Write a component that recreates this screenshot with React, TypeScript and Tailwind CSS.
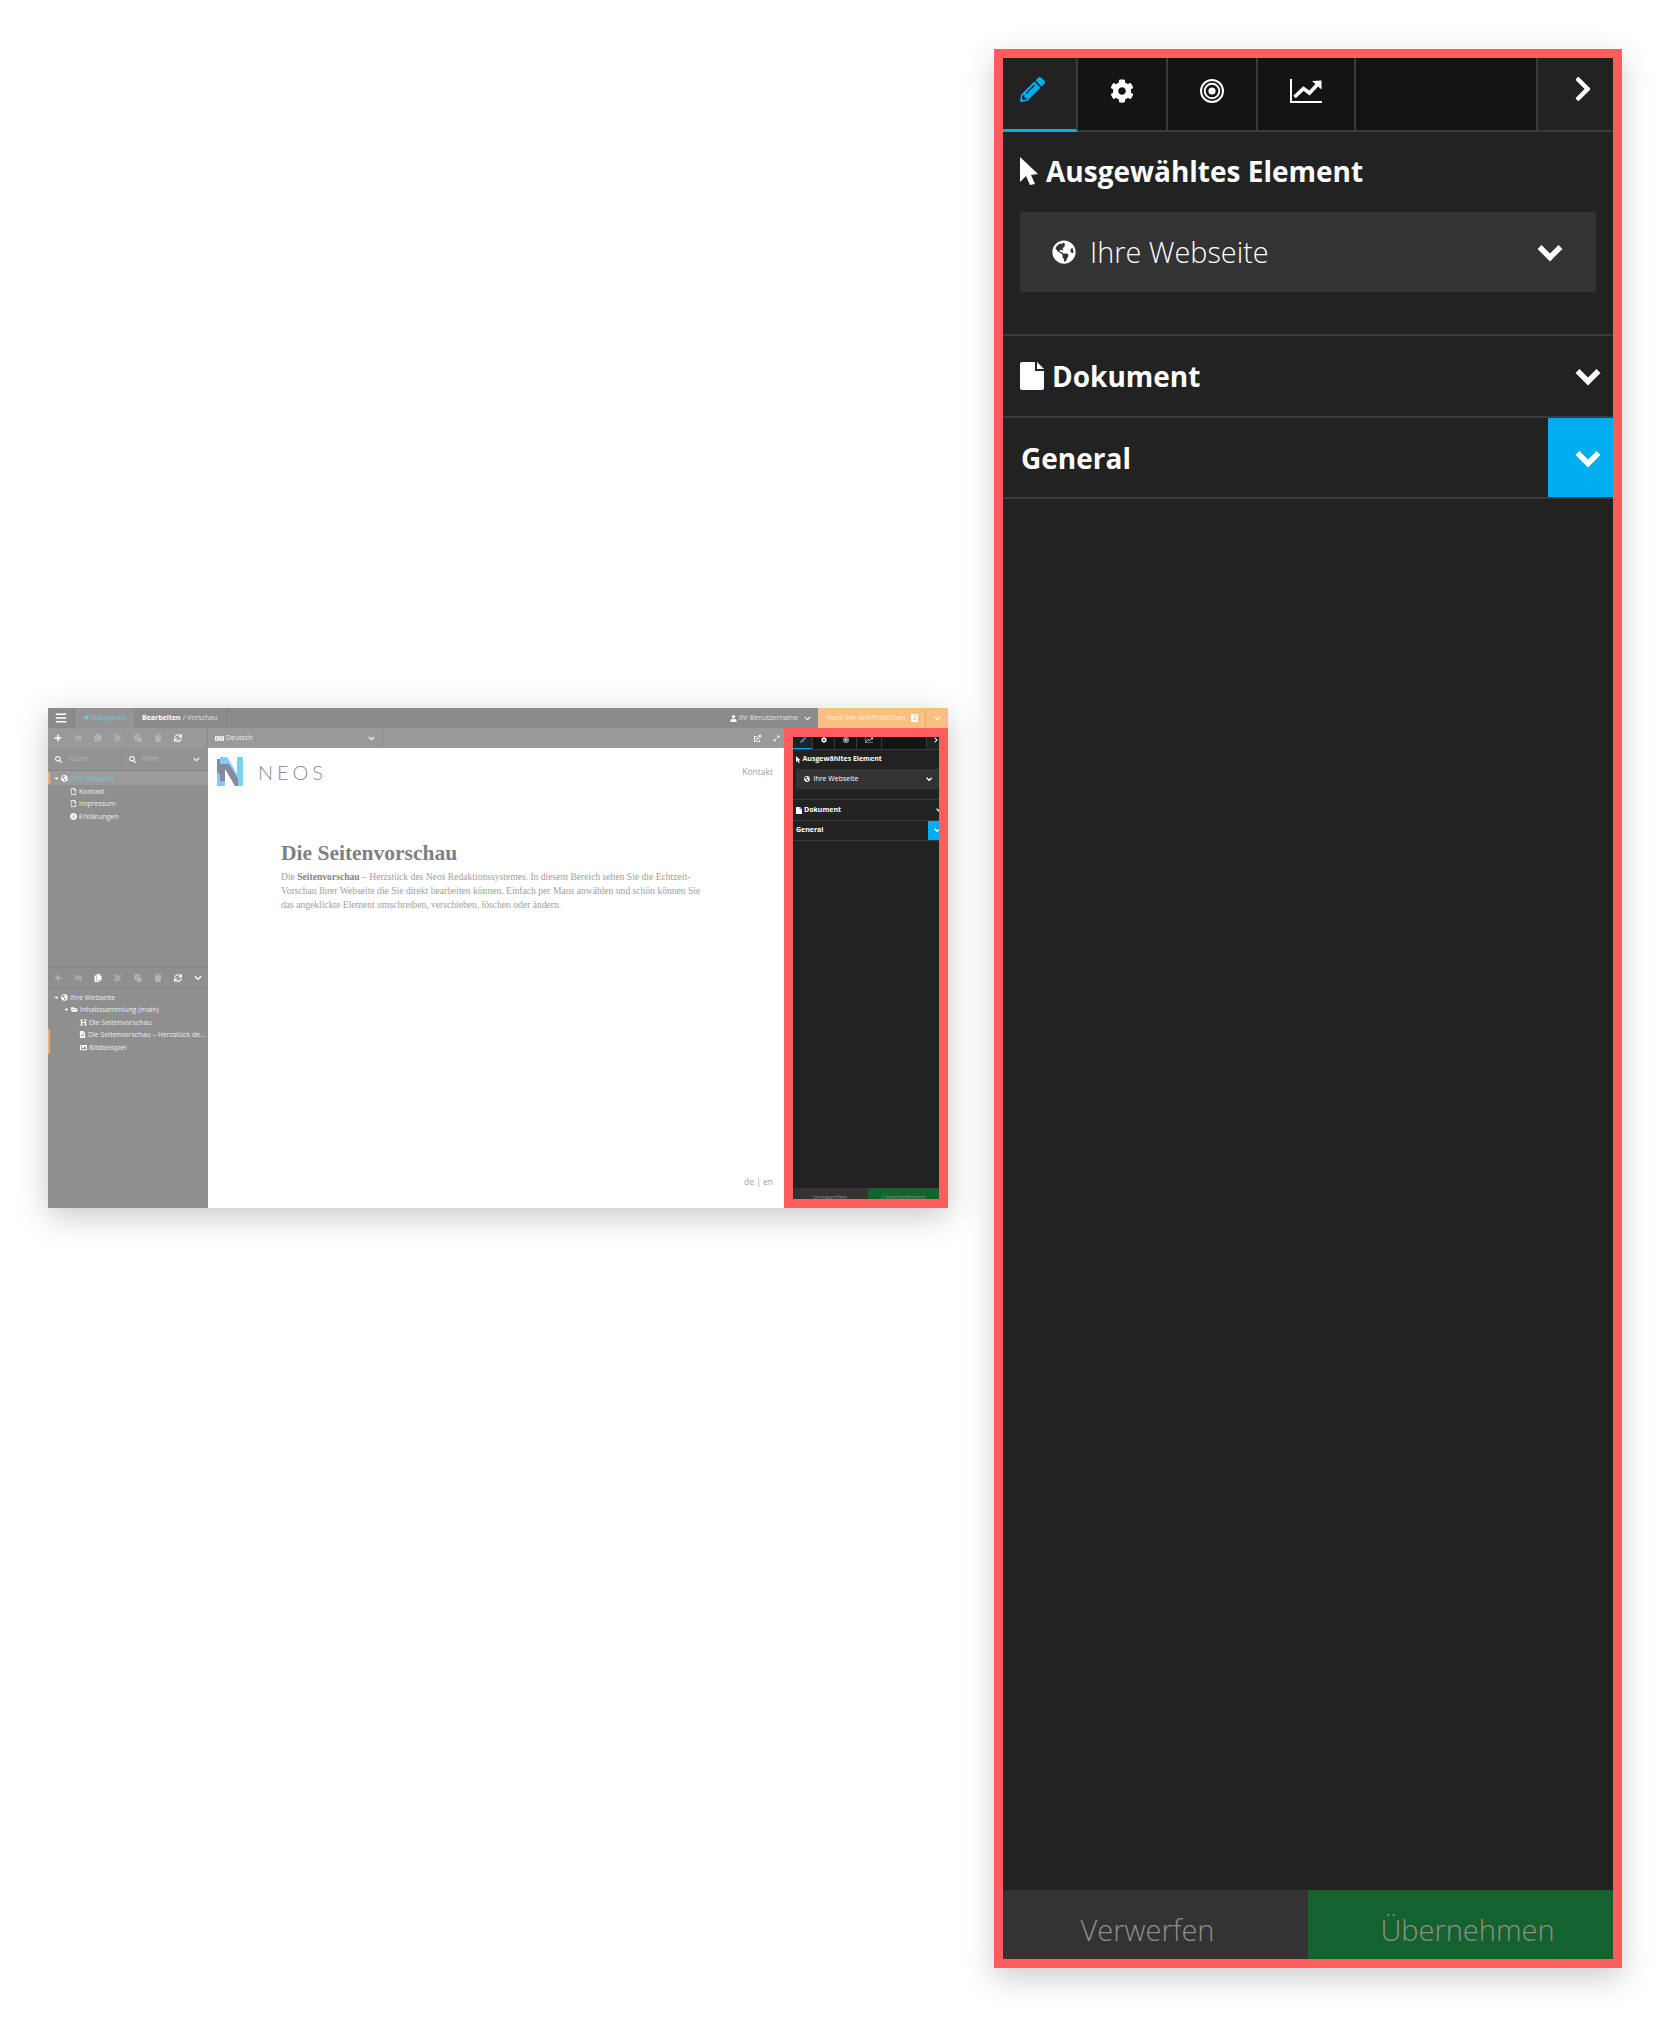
import React from "react";
import {
  FaPencilAlt, FaCog, FaChevronRight, FaChevronDown,
  FaGlobeAmericas, FaRegFile, FaPlus, FaEyeSlash, FaCopy, FaCut, FaPaste, FaTrash, FaSync,
  FaSearch, FaUser, FaBars, FaLocationArrow, FaLanguage, FaExternalLinkAlt, FaExpandAlt, FaInfoCircle,
  FaCaretDown, FaFolderOpen, FaHeading, FaFileAlt, FaImage,
} from "react-icons/fa";

const font = "font-['Open_Sans','Noto_Sans',sans-serif]";

function NeosLogo() {
  return (
    <svg viewBox="0 0 26 29" className="w-[26px] h-[29px] shrink-0">
      <polygon points="0,2 8,2 8,29 0,25" fill="#8a879c" />
      <polygon points="3,0 10,0 20,17 20,0 26,0 26,29 21,29 8,7 3,7" fill="#7dcdf5" />
      <polygon points="0,15 3,17 3,24 8,24 8,29 0,29" fill="#7dcdf5" />
      <polygon points="8,7 12,7 21,22 21,29 18,29 8,12" fill="#8a879c" />
    </svg>
  );
}

function ChevronThick({ className }: { className: string }) {
  return (
    <svg viewBox="0 0 26 18" className={`shrink-0 ${className}`} fill="none" stroke="currentColor" strokeWidth="5.5">
      <polyline points="2.5,3 13,13.5 23.5,3" />
    </svg>
  );
}

function TargetIcon({ className }: { className: string }) {
  return (
    <svg viewBox="0 0 24 24" className={className} fill="none" stroke="currentColor">
      <circle cx="12" cy="12" r="11" strokeWidth="2" />
      <circle cx="12" cy="12" r="7.3" strokeWidth="2" />
      <circle cx="12" cy="12" r="3.6" fill="currentColor" stroke="none" />
    </svg>
  );
}

function ChartIcon({ className }: { className: string }) {
  return (
    <svg viewBox="0 0 32 24" className={className} fill="none" stroke="currentColor">
      <path d="M1 0V23H32" strokeWidth="2" />
      <path d="M4.5 18L13.5 9.5L19.5 14L28 5" strokeWidth="3.6" />
      <polygon points="22,2 31.5,1.5 31.5,10.5" fill="currentColor" stroke="none" />
    </svg>
  );
}

function CursorIcon({ className }: { className: string }) {
  return (
    <svg viewBox="0 0 18 28" className={className} fill="currentColor">
      <path d="M0 0L18 17L11 18L15 27L10 28L6 19L0 25Z" />
    </svg>
  );
}

function FileIcon({ className }: { className: string }) {
  return (
    <svg viewBox="0 0 24 28" className={className} fill="currentColor">
      <path d="M0 2a2 2 0 0 1 2-2h13v9h9v17a2 2 0 0 1-2 2H2a2 2 0 0 1-2-2z" />
      <path d="M17 0l7 7h-7z" />
    </svg>
  );
}

function Tool({ icon, dim }: { icon: React.ReactNode; dim?: boolean }) {
  return (
    <div className={`w-[20px] flex items-center justify-center text-[8px] ${dim ? "text-[#b5b5b5]" : "text-white"}`}>{icon}</div>
  );
}

function Toolbar({ second }: { second?: boolean }) {
  return (
    <div className="flex items-center h-full">
      <Tool icon={<FaPlus />} dim={second} />
      <Tool icon={<FaEyeSlash />} dim />
      <Tool icon={<FaCopy />} dim={!second} />
      <Tool icon={<FaCut />} dim />
      <Tool icon={<FaPaste />} dim />
      <Tool icon={<FaTrash />} dim />
      <Tool icon={<FaSync />} />
      {second && <Tool icon={<FaChevronDown />} />}
    </div>
  );
}

function TreeRow({ pl, icon, label, active, stripe, caret }: { pl: string; icon: React.ReactNode; label: string; active?: boolean; stripe?: boolean; caret?: boolean }) {
  return (
    <div className={`h-[12.5px] flex items-center whitespace-nowrap overflow-hidden border-l-2 ${stripe ? "border-[#e8b06e]" : "border-transparent"} ${active ? "text-[#74c3de]" : "text-[#ececec]"} ${pl}`}>
      {caret && <FaCaretDown className="text-[7px] text-white mr-[1px] shrink-0" />}
      <span className="text-white text-[7px] mr-[2px] shrink-0 w-[7px] flex justify-center">{icon}</span>
      <span className="text-[7px] leading-none">{label}</span>
    </div>
  );
}

function SmallPanel() {
  return (
    <div className="w-[146px] h-full bg-[#222] overflow-hidden flex flex-col relative">
      <div className="h-[13px] shrink-0 flex border-b border-[#3a3a3a] bg-[#141414] overflow-hidden text-white text-[6px]">
        <div className="w-[19px] bg-[#222] border-b border-[#00adee] flex justify-center text-[#00adee]"><FaPencilAlt /></div>
        <div className="w-[22px] border-l border-[#3a3a3a] flex justify-center"><FaCog /></div>
        <div className="w-[22px] border-l border-[#3a3a3a] flex justify-center"><TargetIcon className="w-[6px] h-[6px]" /></div>
        <div className="w-[25px] border-l border-[#3a3a3a] flex justify-center"><ChartIcon className="w-[8px] h-[6px]" /></div>
        <div className="flex-1 border-l border-[#3a3a3a]" />
        <div className="w-[13px] bg-[#222] border-l border-[#3a3a3a] flex justify-end"><FaChevronRight /></div>
      </div>
      <div className="h-[18px] shrink-0 pl-[3px] flex items-center text-white font-bold text-[7px] whitespace-nowrap">
        <CursorIcon className="w-[4.5px] h-[7px] mr-[2px]" />Ausgewähltes Element
      </div>
      <div className="ml-[3px] w-[143px] h-[20px] mt-[1px] bg-[#333] flex items-center pl-[8px] pr-[7px] text-white text-[7px] shrink-0">
        <FaGlobeAmericas className="text-[6px] mr-[3.5px]" />Ihre Webseite
        <ChevronThick className="ml-auto w-[6.5px] h-[4.5px]" />
      </div>
      <div className="h-[21px] mt-[10px] border-t border-[#3a3a3a] flex items-center pl-[3px] font-bold text-white text-[7px] relative shrink-0">
        <FileIcon className="w-[6px] h-[7px] mr-[2px]" />Dokument
        <ChevronThick className="absolute right-[-3px] w-[6.5px] h-[4.5px]" />
      </div>
      <div className="h-[21px] border-y border-[#3a3a3a] flex items-center pl-[3px] font-bold text-white text-[7px] relative shrink-0">
        General
        <div className="absolute right-0 top-0 h-full w-[11px] bg-[#00adee] flex items-center overflow-hidden">
          <ChevronThick className="w-[6.5px] h-[4.5px] ml-[6px]" />
        </div>
      </div>
      <div className="mt-auto h-[11px] shrink-0 flex overflow-hidden text-[7px] text-[#888] text-center leading-none">
        <div className="w-[75px] bg-[#333] pt-[6px]">Verwerfen</div>
        <div className="flex-1 bg-[#14622e] pt-[6px]">Übernehmen</div>
      </div>
    </div>
  );
}

function Miniature() {
  return (
    <div className={`w-[900px] h-[500px] flex flex-col shrink-0 shadow-[0_8px_30px_rgba(0,0,0,0.22)] ${font}`}>
      <div className="h-[20px] bg-[#8b8b8b] flex items-center text-[7px] text-[#e2e2e2] shrink-0">
        <div className="w-[27px] h-full flex items-center justify-center border-r border-[#808080] text-white text-[12px]"><FaBars /></div>
        <div className="h-full w-[59px] bg-[#949494] pl-[8px] flex items-center text-[#74c3de] whitespace-nowrap">
          <FaLocationArrow className="text-[6px] mr-[2px]" />Navigieren
        </div>
        <div className="h-full px-[8px] flex items-center border-r border-[#808080] whitespace-nowrap"><b className="text-white mr-[2px]">Bearbeiten</b> / Vorschau</div>
        <div className="ml-auto h-full flex items-center whitespace-nowrap">
          <FaUser className="text-[7px] text-white mr-[2px]" /> Ihr Benutzername
          <FaChevronDown className="text-white text-[7px] ml-[6px] mr-[7px]" />
        </div>
        <div className="h-full w-[107px] bg-[#fbbf7f] flex items-center pl-[9px] text-[#fdf0dc] text-[6.8px] whitespace-nowrap">
          Nach live veröffentlichen
          <span className="ml-[6px] w-[7px] h-[8px] bg-white text-[#e8ad6d] text-[6.5px] flex items-center justify-center">2</span>
        </div>
        <div className="h-full w-[23px] bg-[#fbbf7f] border-l border-[#e8ad6d] flex items-center justify-center text-white text-[7px]"><FaChevronDown /></div>
      </div>
      <div className="flex-1 flex min-h-0">
        <div className="w-[736px] flex flex-col">
          <div className="h-[20px] bg-[#999] flex shrink-0">
            <div className="w-[160px] border-r border-[#8c8c8c]"><Toolbar /></div>
            <div className="w-[175px] border-r border-[#8c8c8c] flex items-center pl-[7px] text-[7px] text-[#eee] relative">
              <FaLanguage className="text-[9px] mr-[2px] text-white" />Deutsch
              <FaChevronDown className="absolute right-[7px] text-[7px] text-white" />
            </div>
            <div className="flex-1 flex items-center justify-end pr-[4px] gap-[12px] text-white text-[7px]">
              <FaExternalLinkAlt /><FaExpandAlt />
            </div>
          </div>
          <div className="flex-1 flex min-h-0">
            <div className="w-[160px] bg-[#8f8f8f] flex flex-col shrink-0">
              <div className="h-[220px] flex flex-col border-b border-[#858585]">
                <div className="h-[23px] bg-[#939393] border-b border-[#858585] flex items-center text-[7px] text-[#b5b5b5] relative shrink-0">
                  <div className="w-[74px] h-full flex items-center pl-[7px] border-r border-[#8a8a8a]">
                    <FaSearch className="text-[7px] text-white mr-[6px]" />Suche
                  </div>
                  <div className="flex-1 h-full flex items-center pl-[7px]">
                    <FaSearch className="text-[7px] text-white mr-[6px]" />Filter
                    <FaChevronDown className="absolute right-[8px] text-[7px] text-white" />
                  </div>
                </div>
                <div className="bg-[#9b9b9b] h-[14px] flex items-center"><div className="w-full"><TreeRow pl="pl-[3px]" caret stripe active icon={<FaGlobeAmericas />} label="Ihre Webseite" /></div></div>
                <TreeRow pl="pl-[20px]" icon={<FaRegFile />} label="Kontakt" />
                <TreeRow pl="pl-[20px]" icon={<FaRegFile />} label="Impressum" />
                <TreeRow pl="pl-[20px]" icon={<FaInfoCircle />} label="Erklärungen" />
              </div>
              <div className="h-[20px] border-b border-[#858585] shrink-0"><Toolbar second /></div>
              <div className="pt-[3px]">
                <TreeRow pl="pl-[3px]" caret icon={<FaGlobeAmericas />} label="Ihre Webseite" />
                <TreeRow pl="pl-[13px]" caret icon={<FaFolderOpen />} label="Inhaltssammlung (main)" />
                <TreeRow pl="pl-[30px]" icon={<FaHeading />} label="Die Seitenvorschau" />
                <TreeRow pl="pl-[29px]" stripe icon={<FaFileAlt />} label="Die Seitenvorschau – Herzstück de..." />
                <TreeRow pl="pl-[30px]" stripe icon={<FaImage />} label="Bildbeispiel" />
              </div>
            </div>
            <div className="flex-1 bg-white flex flex-col pl-[9px] pr-[11px] pt-[9px] pb-[19px] relative">
              <div className="flex items-start">
                <NeosLogo />
                <span className="ml-[15px] mt-[3px] text-[20px] leading-[24px] tracking-[0.2em] text-[#8a879c] font-light font-['Lato',sans-serif]">NEOS</span>
                <span className="ml-auto mt-[9px] text-[8.5px] text-[#a0a0a0]">Kontakt</span>
              </div>
              <div className="ml-[64px] mt-[54px] w-[425px] font-['Liberation_Serif',serif]">
                <h1 className="text-[21.5px] leading-[26px] font-bold text-[#808080]">Die Seitenvorschau</h1>
                <p className="text-[9.6px] leading-[14px] text-[#a0a0a0] mt-[4px]">
                  Die <b className="text-[#858585]">Seitenvorschau</b> – Herzstück des Neos Redaktionssystemes. In diesem Bereich sehen Sie die Echtzeit-Vorschau Ihrer Webseite die Sie direkt bearbeiten können. Einfach per Maus anwählen und schön können Sie das angeklickte Element umschreiben, verschieben, löschen oder ändern.
                </p>
              </div>
              <div className="mt-auto self-end text-[8.5px] text-[#a0a0a0]">de | en</div>
            </div>
          </div>
        </div>
        <div className="w-[164px] border-[9px] border-[#ff5c5c] box-border min-h-0"><SmallPanel /></div>
      </div>
    </div>
  );
}

function TabCell({ className, children }: { className: string; children?: React.ReactNode }) {
  return <div className={`h-full flex items-center justify-center border-r-2 border-[#3a3a3a] ${className}`}>{children}</div>;
}

function BigPanel() {
  return (
    <div className={`w-[628px] h-[1919px] shrink-0 border-[9px] border-[#ff5c5c] bg-[#222] flex flex-col shadow-[0_10px_30px_rgba(0,0,0,0.2)] ${font}`}>
      <div className="h-[74px] shrink-0 flex border-b-2 border-[#3a3a3a] bg-[#141414] text-white">
        <div className="w-[75px] h-[74px] shrink-0 bg-[#222] border-r-2 border-b-[3px] border-r-[#3a3a3a] border-b-[#00adee] flex items-center justify-center text-[#00adee] text-[25px] pb-[8px] pr-[15px]"><FaPencilAlt /></div>
        <TabCell className="w-[90px] text-[24px] pb-[6px]"><FaCog /></TabCell>
        <TabCell className="w-[90px] pb-[6px]"><TargetIcon className="w-[24px] h-[24px]" /></TabCell>
        <TabCell className="w-[98px] pb-[6px]"><ChartIcon className="w-[32px] h-[24px]" /></TabCell>
        <TabCell className="w-[182px]" />
        <div className="flex-1 bg-[#222] flex items-center justify-end pr-[16px] pb-[10px] text-[28px]"><FaChevronRight /></div>
      </div>
      <div className="h-[66px] shrink-0 flex items-center pl-[17px] pt-[12px] text-white font-bold text-[28px] whitespace-nowrap">
        <CursorIcon className="w-[18px] h-[28px] mr-[8px] shrink-0" />Ausgewähltes Element
      </div>
      <div className="mx-[17px] h-[80px] mt-[14px] shrink-0 bg-[#333] flex items-center pl-[32px] pr-[33px] text-white text-[28.8px] font-light">
        <FaGlobeAmericas className="text-[24px] mr-[14px]" />Ihre Webseite
        <ChevronThick className="ml-auto mt-[2px] w-[26px] h-[18px]" />
      </div>
      <div className="h-[82px] mt-[42px] shrink-0 border-t-2 border-[#3a3a3a] flex items-center pl-[17px] pr-[12px] text-white font-bold text-[28px]">
        <FileIcon className="w-[24px] h-[28px] mr-[8px] shrink-0" />Dokument
        <ChevronThick className="ml-auto mt-[2px] w-[26px] h-[18px]" />
      </div>
      <div className="h-[83px] shrink-0 border-y-2 border-[#3a3a3a] flex items-stretch pl-[18px] text-white font-bold text-[28px]">
        <span className="self-center">General</span>
        <div className="ml-auto w-[65px] bg-[#00adee] flex items-center justify-end pr-[12px]">
          <ChevronThick className="mt-[2px] w-[26px] h-[18px]" />
        </div>
      </div>
      <div className="mt-auto h-[69px] shrink-0 flex text-[#8f8f8f] text-[29px] font-light">
        <div className="w-[305px] bg-[#333] flex justify-center pt-[18px] pr-[16px]">Verwerfen</div>
        <div className="flex-1 bg-[#14622e] flex justify-center pt-[18px] pl-[14px]">Übernehmen</div>
      </div>
    </div>
  );
}

export default function App() {
  return (
    <div className="w-[1675px] h-[2018px] bg-white flex items-start overflow-hidden">
      <div className="ml-[48px] mt-[708px]"><Miniature /></div>
      <div className="ml-[46px] mt-[49px]"><BigPanel /></div>
    </div>
  );
}
